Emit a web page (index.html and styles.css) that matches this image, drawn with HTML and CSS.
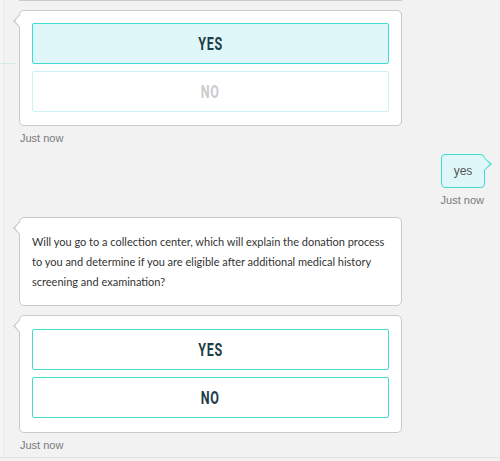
FILE: index.html
```html
<!DOCTYPE html>
<html lang="en">
<head>
<meta charset="utf-8">
<title>Chat</title>
<link rel="stylesheet" href="styles.css">
</head>
<body>
<div class="page">
  <div class="side">
    <div class="side-line"></div>
  </div>
  <div class="chat">
    <div class="prev-card"></div>

    <div class="card bot first">
      <div class="opt selected"><span class="opt-label">YES</span></div>
      <div class="opt disabled"><span class="opt-label">NO</span></div>
    </div>
    <div class="time">Just now</div>

    <div class="user-row">
      <div class="user-bubble">yes</div>
      <div class="time right">Just now</div>
    </div>

    <div class="card bot question">
      <p class="msg">Will you go to a collection center, which will explain the donation process to you and determine if you are eligible after additional medical history screening and examination?</p>
    </div>

    <div class="card bot options">
      <div class="opt"><span class="opt-label">YES</span></div>
      <div class="opt"><span class="opt-label">NO</span></div>
    </div>
    <div class="time">Just now</div>
  </div>
</div>
</body>
</html>
```
FILE: styles.css
```css
* { box-sizing: border-box; }
html, body { margin: 0; padding: 0; }
body {
  background: #f2f2f2;
  font-family: "Liberation Sans", Arial, sans-serif;
  width: 500px;
  height: 461px;
  overflow: hidden;
}
.page {
  display: flex;
  height: 458px;
  border-bottom: 1px solid #e2e2e2;
}
.side {
  width: 4px;
  flex: none;
  background: #f6f6f6;
  border-right: 1px solid #ececec;
  position: relative;
}
.side-line {
  position: absolute;
  left: 0;
  top: 63px;
  width: 15px;
  height: 1px;
  background: #d5e8ea;
}
.chat {
  flex: 1;
  padding-left: 15px;
  display: flex;
  flex-direction: column;
  align-items: flex-start;
}
.prev-card {
  width: 383px;
  height: 1px;
  background: #c9c9c9;
}
.card {
  position: relative;
  width: 383px;
  background: #fff;
  border: 1px solid #c9c9c9;
  border-radius: 5px;
  display: flex;
  flex-direction: column;
  gap: 7px;
}
.card.bot::before,
.card.bot::after {
  content: "";
  position: absolute;
  top: 3px;
  width: 0;
  height: 0;
  border-style: solid;
}
.card.bot::before {
  left: -7px;
  border-width: 7px 7px 7px 0;
  border-color: transparent #c9c9c9 transparent transparent;
}
.card.bot::after {
  left: -5px;
  border-width: 7px 6px 7px 0;
  border-color: transparent #fff transparent transparent;
}
.card.first {
  margin-top: 9px;
  padding: 12px 12px 13px;
}
.card.question {
  margin-top: 10px;
  padding: 14px 12px 13px;
}
.card.options {
  margin-top: 9px;
  padding: 13px 12px 14px;
}
.opt {
  height: 41px;
  border: 1px solid #40dccf;
  border-radius: 2px;
  background: #fff;
  display: flex;
  align-items: center;
  justify-content: center;
}
.opt.selected {
  background: #e0f7f9;
}
.opt.disabled {
  border-color: #cdf2f4;
}
.opt-label {
  display: inline-block;
  font-family: Roboto, "Liberation Sans", sans-serif;
  font-weight: 700;
  font-size: 19px;
  letter-spacing: 1px;
  color: #1f3d46;
  transform: scaleX(0.66);
}
.opt.disabled .opt-label {
  color: #cccccc;
}
.msg {
  margin: 0;
  font-family: Lato, "Noto Sans", sans-serif;
  font-size: 11px;
  line-height: 20px;
  color: #333;
}
.time {
  margin-top: 6px;
  font-size: 11px;
  line-height: 13px;
  color: #7a7a7a;
  padding-left: 1px;
}
.user-row {
  align-self: flex-end;
  margin-top: 9px;
  margin-right: 15px;
  display: flex;
  flex-direction: column;
  align-items: flex-end;
}
.user-bubble {
  position: relative;
  width: 44px;
  height: 34px;
  background: #e0f7f9;
  border: 1px solid #40dccf;
  border-radius: 4px;
  font-size: 12px;
  color: #555;
  display: flex;
  align-items: center;
  justify-content: center;
}
.user-bubble::before,
.user-bubble::after {
  content: "";
  position: absolute;
  top: 3px;
  width: 0;
  height: 0;
  border-style: solid;
}
.user-bubble::before {
  right: -8px;
  border-width: 6px 0 6px 7px;
  border-color: transparent transparent transparent #40dccf;
}
.user-bubble::after {
  right: -6px;
  border-width: 6px 0 6px 6px;
  border-color: transparent transparent transparent #e0f7f9;
}
.time.right {
  margin-top: 6px;
  padding-left: 0;
  padding-right: 1px;
}
```
